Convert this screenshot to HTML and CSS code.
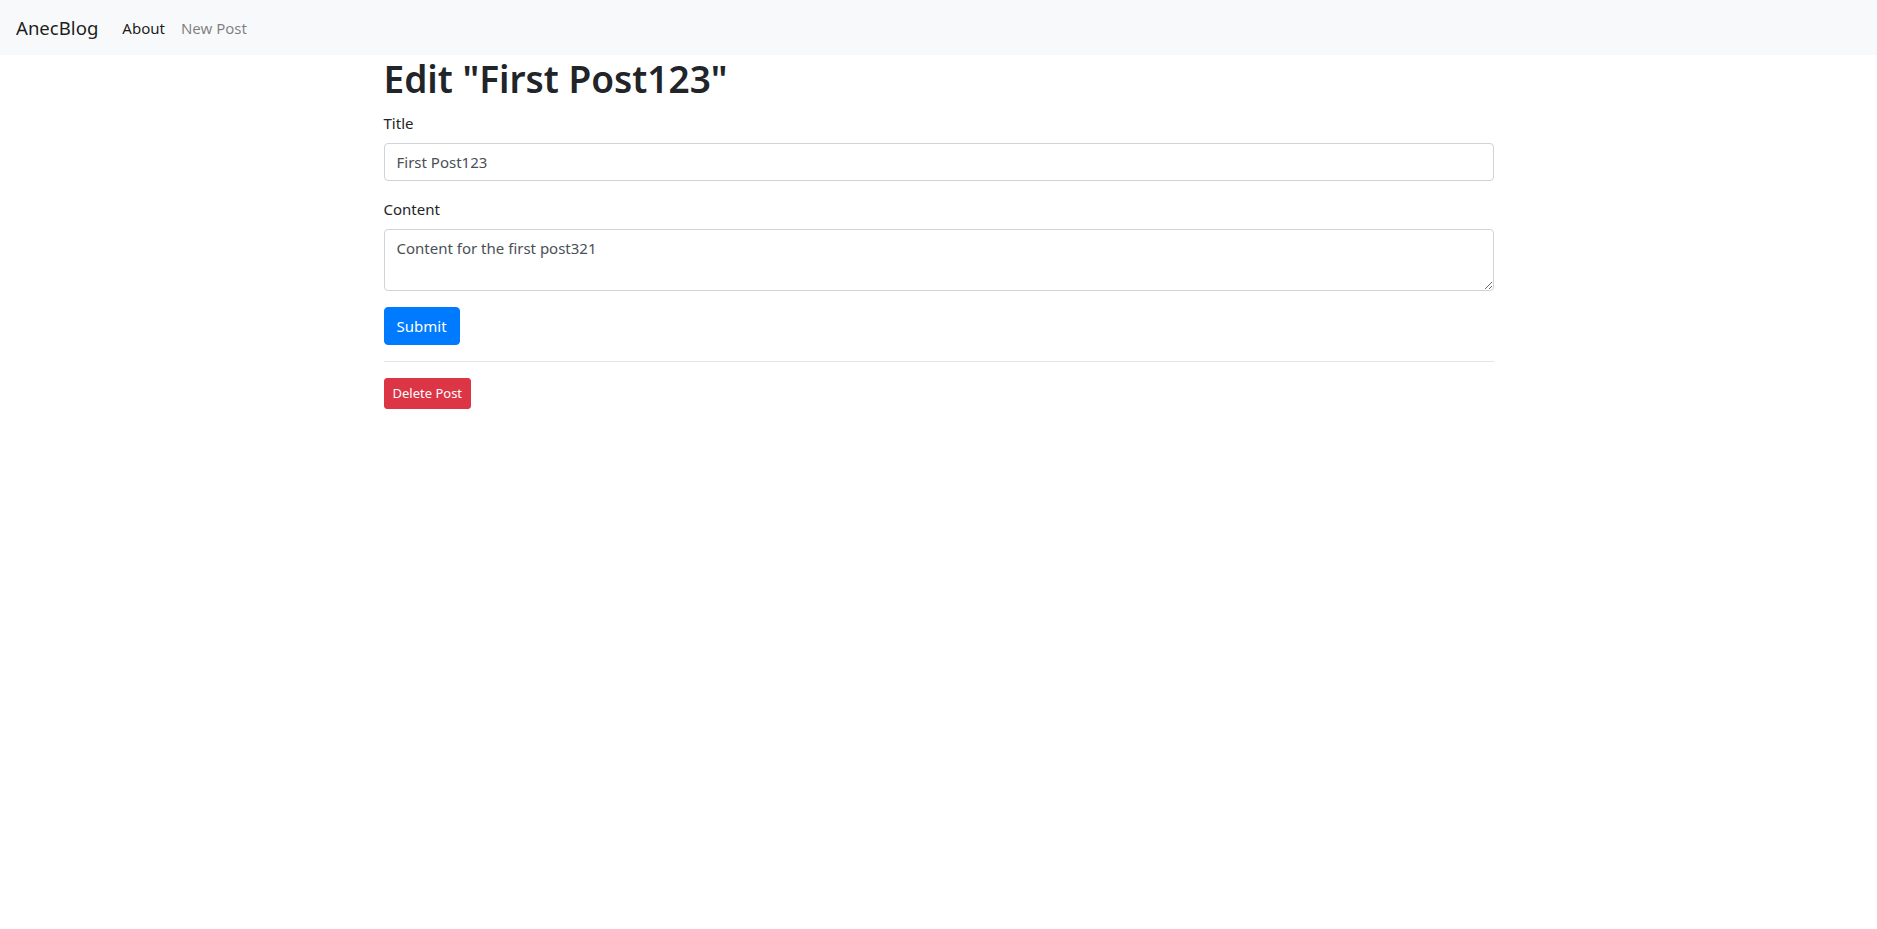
FILE: index.html
```html
<!DOCTYPE html>
<html lang="en">
<head>
<meta charset="utf-8">
<title>AnecBlog</title>
<link rel="stylesheet" href="styles.css">
</head>
<body>
<nav class="navbar">
  <a class="brand" href="#">AnecBlog</a>
  <ul class="nav">
    <li><a class="nav-link active" href="#">About</a></li>
    <li><a class="nav-link" href="#">New Post</a></li>
  </ul>
</nav>
<main class="container">
  <h1 class="heading">Edit "First Post123"</h1>
  <form class="form">
    <div class="form-group">
      <label class="label" for="title">Title</label>
      <input class="control" id="title" type="text" value="First Post123">
    </div>
    <div class="form-group">
      <label class="label" for="content">Content</label>
      <textarea class="control area" id="content" rows="2">Content for the first post321</textarea>
    </div>
    <button class="btn btn-primary" type="button">Submit</button>
  </form>
  <hr class="rule">
  <button class="btn btn-danger btn-sm" type="button">Delete Post</button>
</main>
</body>
</html>
```
FILE: styles.css
```css
* { box-sizing: border-box; }
html, body { margin: 0; padding: 0; }
body {
  font-family: "Noto Sans", "Open Sans", sans-serif;
  font-size: 15px;
  line-height: 24px;
  color: #212529;
  background: #fff;
}
.navbar {
  display: flex;
  align-items: center;
  height: 55px;
  padding: 0 16px;
  background: #f8f9fa;
}
.brand {
  font-size: 18.6px;
  line-height: 30px;
  color: rgba(0,0,0,.9);
  text-decoration: none;
  margin-right: 16px;
}
.nav {
  display: flex;
  list-style: none;
  margin: 0;
  padding: 0;
}
.nav-link {
  display: block;
  padding: 8px 8px;
  color: rgba(0,0,0,.5);
  text-decoration: none;
}
.nav-link.active { color: rgba(0,0,0,.9); }
.container {
  max-width: 1140px;
  margin: 0 auto;
  padding: 0 15px;
}
.heading {
  font-size: 37px;
  font-weight: 600;
  line-height: 48px;
  margin: 0 0 8px;
}
.form { margin: 0; }
.form-group { margin-bottom: 16px; }
.label {
  display: inline-block;
  margin-bottom: 8px;
}
.control {
  display: block;
  width: 100%;
  height: 38px;
  padding: 6px 12px;
  font-family: inherit;
  font-size: 15px;
  line-height: 24px;
  color: #495057;
  background: #fff;
  border: 1px solid #ced4da;
  border-radius: 4px;
}
.area {
  height: 62px;
  resize: vertical;
}
.btn {
  display: inline-block;
  font-family: inherit;
  font-size: 15px;
  line-height: 24px;
  padding: 6px 12px;
  border: 1px solid transparent;
  border-radius: 4px;
  color: #fff;
  cursor: pointer;
}
.btn-primary { background: #007bff; border-color: #007bff; }
.btn-danger { background: #dc3545; border-color: #dc3545; }
.btn-sm {
  font-size: 13px;
  line-height: 21px;
  padding: 4px 8px;
  border-radius: 3px;
}
.rule {
  margin: 16px 0;
  border: 0;
  border-top: 1px solid rgba(0,0,0,.1);
}
```
